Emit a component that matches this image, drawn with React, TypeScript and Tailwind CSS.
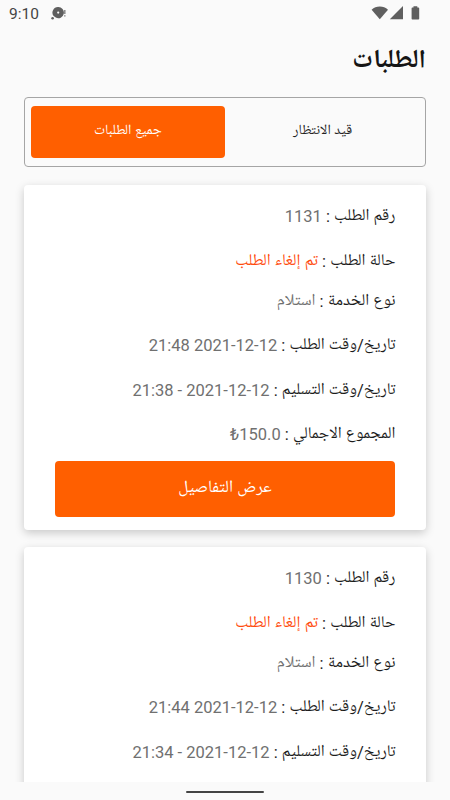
import React from "react";

interface Order {
    id: string;
    status: string;
    service: string;
    orderedAt: string;
    deliveredAt: string;
    total?: string;
}

const orders: Order[] = [
    {id: "1131", status: "تم إلغاء الطلب", service: "استلام", orderedAt: "21:48 2021-12-12", deliveredAt: "21:38 - 2021-12-12", total: "₺150.0"},
    {id: "1130", status: "تم إلغاء الطلب", service: "استلام", orderedAt: "21:44 2021-12-12", deliveredAt: "21:34 - 2021-12-12"},
];

const StatusBar = () => {
    return (
        <div dir="ltr" className="flex h-7 shrink-0 items-center pl-[9px] pr-[30px] text-[#5f5f5f]">
            <span className="w-[30px] text-[15.5px] leading-7 text-[#444]">9:10</span>
            <svg className="mb-[2px] ml-[12px] h-[14px] w-[16px]" viewBox="0 0 16 14" fill="currentColor">
                <path fillRule="evenodd" d="M7 1a5.6 5.6 0 1 1-2.2 10.6L2.6 10A5.6 5.6 0 0 1 7 1Zm.2 4.5a1.1 1.1 0 1 0 0 2.2 1.1 1.1 0 0 0 0-2.2Z"/>
                <circle cx="1.6" cy="12.2" r="1.3"/>
                <path d="M13.3 4h1.1v4h-1.1zM13.3 9.2h1.1v1.3h-1.1z"/>
            </svg>
            <svg className="mb-[2px] ml-auto h-[14px] w-[49px]" viewBox="0 0 49 14" fill="currentColor">
                <path d="M.6 3.7a12.2 12.2 0 0 1 16.4 0L8.8 13.2Z"/>
                <path d="M32 0v13.2H18.8Z"/>
                <path d="M42.5.2h3.8v1.3h1.1c.5 0 .8.3.8.8V12.8c0 .5-.3.8-.8.8h-6c-.5 0-.8-.3-.8-.8V2.3c0-.5.3-.8.8-.8h1.1z"/>
            </svg>
        </div>
    )
}

interface RowProps {
    label: string;
    value: string;
    className: string;
    valueClass?: string;
}

const Row = ({label, value, className, valueClass = "text-[#707070]"}: RowProps) => {
    return (
        <p className={`whitespace-nowrap text-[#1c1c1c] ${className}`}>
            {label} : <bdi className={valueClass}>{value}</bdi>
        </p>
    )
}

const OrderCard = ({order}: { order: Order }) => {
    return (
        <div className="h-[345px] shrink-0 rounded-[4px] bg-white px-[30.5px] pt-[10px] text-[16.5px] shadow-[0_3px_10px_rgba(0,0,0,0.2)]">
            <Row className="h-[44px] leading-[44px]" label="رقم الطلب" value={order.id}/>
            <Row className="h-[45px] leading-[46px]" label="حالة الطلب" value={order.status} valueClass="text-[#ff4b0c]"/>
            <Row className="h-[36px] leading-[36px]" label="نوع الخدمة" value={order.service}/>
            <Row className="h-[53px] leading-[52px]" label="تاريخ/وقت الطلب" value={order.orderedAt}/>
            <Row className="h-[36px] leading-[36px]" label="تاريخ/وقت التسليم" value={order.deliveredAt}/>
            {order.total && (
                <>
                    <Row className="h-[52px] leading-[52px]" label="المجموع الاجمالي" value={order.total}/>
                    <button className="mr-[0.5px] flex h-[55.5px] w-[340px] items-center justify-center rounded-[4px] bg-[#ff5f00] pt-[1px] text-[17.2px] text-white">
                        عرض التفاصيل
                    </button>
                </>
            )}
        </div>
    )
}

const App = () => {
    return (
        <div dir="rtl" className="flex h-[800px] w-[450px] flex-col overflow-hidden bg-[#fafafa] font-[Roboto,'Noto_Naskh_Arabic_UI','DejaVu_Sans_Condensed','DejaVu_Sans',sans-serif]">
            <StatusBar/>
            <h1 className="h-[69px] shrink-0 px-6 text-[26px] leading-[68px] font-bold text-[#151515]">الطلبات</h1>
            <div className="mx-6 flex h-[70px] shrink-0 rounded-[4px] border border-[#a5a5a5] pt-2 pr-[5px] pl-[5.5px]">
                <div className="flex h-[52px] flex-1 items-center justify-center pb-[1px] text-[14.2px] text-[#222]">قيد الانتظار</div>
                <div className="flex h-[52px] flex-1 items-center justify-center rounded-[4px] bg-[#ff5f00] pb-[1px] text-[14.2px] text-white">جميع الطلبات</div>
            </div>
            <div className="flex min-h-0 flex-1 flex-col gap-[17px] overflow-hidden px-6 pt-[18px]">
                {orders.map((order) => <OrderCard key={order.id} order={order}/>)}
            </div>
            <div className="flex h-[18px] shrink-0 justify-center pt-[9px]">
                <div className="h-[2px] w-[78px] rounded-full bg-[#444]"/>
            </div>
        </div>
    )
}

export default App;
